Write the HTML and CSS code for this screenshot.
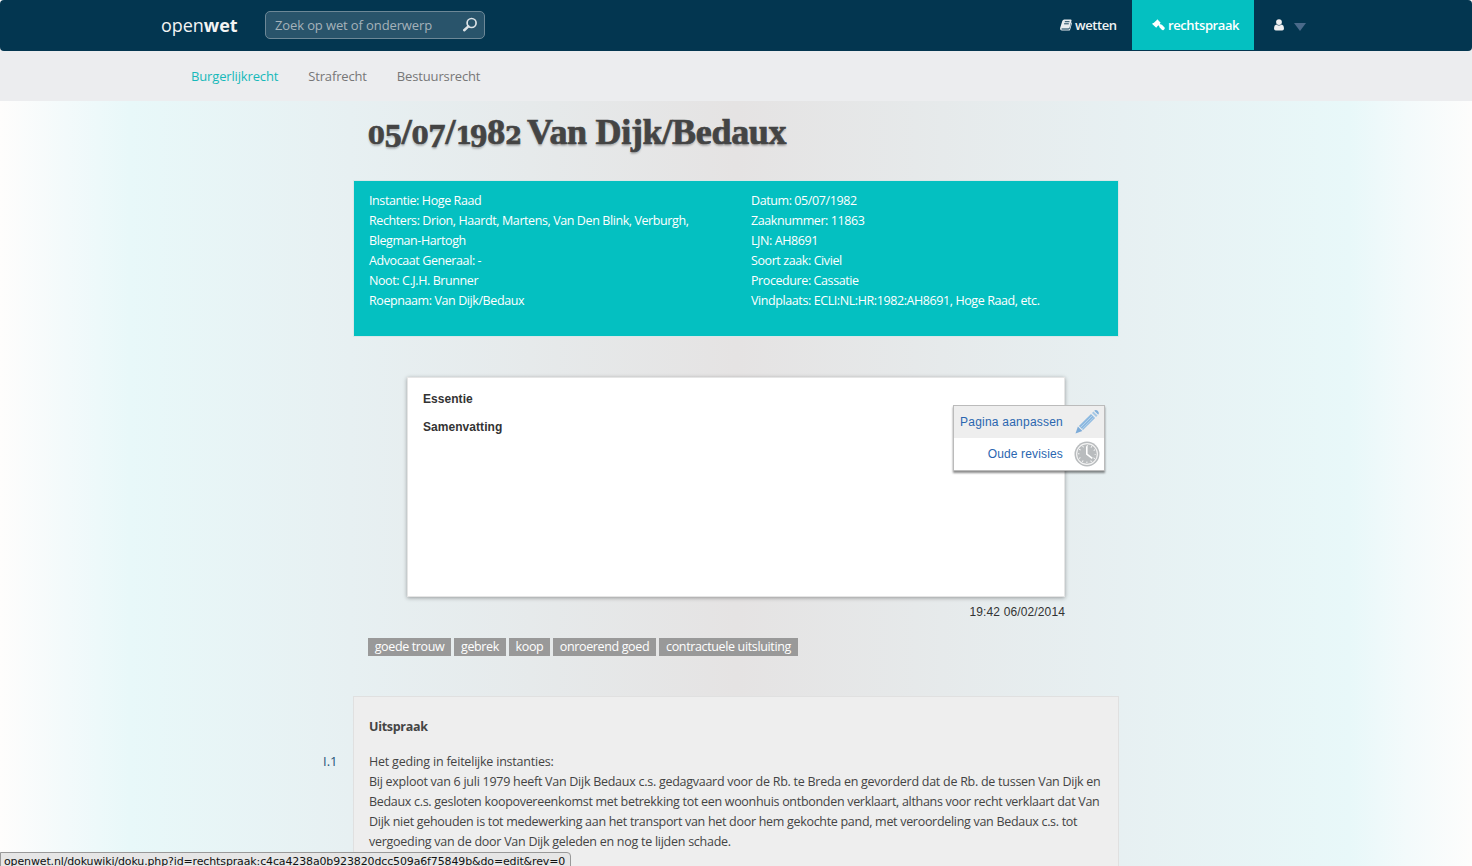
FILE: index.html
```html
<!DOCTYPE html>
<html lang="nl">
<head>
<meta charset="utf-8">
<title>05/07/1982 Van Dijk/Bedaux - openwet</title>
<link rel="stylesheet" href="styles.css">
</head>
<body>
<header class="topbar">
  <div class="topbar-inner">
    <a class="brand">open<b>wet</b></a>
    <div class="search">
      <span class="search-text">Zoek op wet of onderwerp</span>
      <svg class="search-icon" width="16" height="16" viewBox="0 0 16 16"><circle cx="9.6" cy="6" r="4.5" fill="none" stroke="#dce2e6" stroke-width="1.7"/><path d="M6.4 9.4L2.2 13.2" stroke="#dce2e6" stroke-width="2.5" stroke-linecap="round"/></svg>
    </div>
    <nav class="main-nav">
      <a class="nav-wetten"><svg width="12" height="12" viewBox="0 0 12 12"><path d="M4.2.5H10.6Q11.8.5 11.5 1.7L9.6 8.4Q9.3 9.4 8.2 9.4H1.9Q1 9.8 1.8 10.5H8.6L9.5 9.9 11.5 3.2Q12.3 3.6 11.9 4.6L10.2 10.4Q9.9 11.6 8.7 11.6H1.8Q-.4 11 .2 8.8L2.3 2Q2.8.5 4.2.5Z" fill="#e8ecef"/><path d="M4.8 2.7H9.5M4.1 4.8H8.8" stroke="#033650" stroke-width=".9"/></svg><span>wetten</span></a>
      <a class="nav-rechtspraak"><svg width="13" height="12" viewBox="0 0 13 12"><path d="M5.3.3L8.7 3.7 7.8 4.5 9 5.8 9.7 5.6 12.8 8.8Q13 10 11.6 11Q10.8 11.6 9.8 10.8L7.2 8.1 7.4 7.4 6.3 6.2 4.2 8.8.2 4.9.8 4 1.6 4 4.6 1.2Z" fill="#fff"/></svg><span>rechtspraak</span></a>
      <a class="nav-user"><svg width="11" height="12" viewBox="0 0 10 12"><circle cx="5" cy="3.1" r="2.9" fill="#f0f0f1"/><path d="M2.2 5.4Q5 7.6 7.8 5.4Q10 6 10 9.2Q10 11.4 8.2 11.4H1.8Q0 11.4 0 9.2Q0 6 2.2 5.4Z" fill="#f0f0f1"/></svg><i class="caret"></i></a>
    </nav>
  </div>
</header>
<nav class="subnav">
  <a class="sub active">Burgerlijkrecht</a><a class="sub">Strafrecht</a><a class="sub">Bestuursrecht</a>
</nav>
<main class="page">
  <h1 class="title"><span class="dates"><span class="lo">0</span><span class="dn">5</span>/<span class="lo">0</span><span class="dn">7</span>/<span class="lo one">1</span><span class="dn">9</span>8<span class="lo">2</span></span><span class="name">Van Dijk/Bedaux</span></h1>
  <section class="info">
    <div class="info-col">
      <div>Instantie: Hoge Raad</div>
      <div>Rechters: Drion, Haardt, Martens, Van Den Blink, Verburgh,<br>Blegman-Hartogh</div>
      <div>Advocaat Generaal: -</div>
      <div>Noot: C.J.H. Brunner</div>
      <div>Roepnaam: Van Dijk/Bedaux</div>
    </div>
    <div class="info-col">
      <div>Datum: 05/07/1982</div>
      <div>Zaaknummer: 11863</div>
      <div>LJN: AH8691</div>
      <div>Soort zaak: Civiel</div>
      <div>Procedure: Cassatie</div>
      <div>Vindplaats: ECLI:NL:HR:1982:AH8691, Hoge Raad, etc.</div>
    </div>
  </section>
  <section class="summary">
    <h2>Essentie</h2>
    <h2>Samenvatting</h2>
    <div class="tools">
      <a class="tool current"><span>Pagina aanpassen</span><svg width="26" height="26" viewBox="0 0 26 26"><path d="M1.5 24.5L3.9 17.6 8.4 22.1Z" fill="#7cabd8"/><path d="M4.9 17L17 4.9 21.1 9 9 21.1Z" fill="#8db9e0"/><path d="M6.5 18.5L18 7M8 20.2L19.7 8.5" stroke="#c9def0" stroke-width=".7"/><path d="M18 3.9L19.4 2.5 23.5 6.6 22.1 8Z" fill="#a5c8e6"/><path d="M20.2 1.7Q22 .2 23.9 2.1T24.3 5.8Z" fill="#82b0db"/></svg></a>
      <a class="tool"><span>Oude revisies</span><svg width="26" height="26" viewBox="0 0 26 26"><circle cx="13" cy="13" r="12.5" fill="#b9bcbe"/><circle cx="13" cy="13" r="10.4" fill="#b9bcbe" stroke="#f4f4f4" stroke-width="1.1"/><circle cx="13" cy="13" r="8.3" fill="none" stroke="#fff" stroke-width="1.6" stroke-dasharray=".9 3.446" stroke-dashoffset=".45"/><path d="M12.8 5.2V13.2L18.3 17.4" fill="none" stroke="#fff" stroke-width="1.6"/></svg></a>
    </div>
  </section>
  <div class="stamp">19:42 06/02/2014</div>
  <div class="tags"><a class="t1">goede trouw</a><a class="t2">gebrek</a><a class="t3">koop</a><a class="t4">onroerend goed</a><a class="t5">contractuele uitsluiting</a></div>
  <section class="ruling">
    <h3>Uitspraak</h3>
    <div class="para">
      <a class="marker">I.1</a>
      <p><span class="l0">Het geding in feitelijke instanties:</span><br>
      <span class="l1">Bij exploot van 6 juli 1979 heeft Van Dijk Bedaux c.s. gedagvaard voor de Rb. te Breda en gevorderd dat de Rb. de tussen Van Dijk en</span><br>
      <span class="l2">Bedaux c.s. gesloten koopovereenkomst met betrekking tot een woonhuis ontbonden verklaart, althans voor recht verklaart dat Van</span><br>
      <span class="l3">Dijk niet gehouden is tot medewerking aan het transport van het door hem gekochte pand, met veroordeling van Bedaux c.s. tot</span><br>
      <span class="l4">vergoeding van de door Van Dijk geleden en nog te lijden schade.</span></p>
    </div>
  </section>
</main>
<div class="status">openwet.nl/dokuwiki/doku.php?id=rechtspraak:c4ca4238a0b923820dcc509a6f75849b&amp;do=edit&amp;rev=0</div>
</body>
</html>
```
FILE: styles.css
```css
* { box-sizing: border-box; }
html, body { height: 866px; }
body {
  margin: 0;
  overflow: hidden;
  font: 13px/20px "Open Sans", sans-serif;
  color: #444;
  background: linear-gradient(90deg, #fefdfc 0, #f3fafb 65px, #e8f8f9 130px, #e7f0f2 350px, #e5e3e3 736px, #e7f0f2 1122px, #e8f8f9 1350px, #f3fafb 1407px, #fdfdfc 100%);
}
.topbar { position: relative; z-index: 1; height: 51px; background: #033650; border-radius: 4px; }
.subnav { margin-top: -4px; padding: 4px 0 0 191px; height: 54px; background: #ecedef; display: flex; align-items: center; color: #777; letter-spacing: -.15px; }
.topbar-inner { width: 1150px; margin: 0 auto; height: 51px; display: flex; align-items: flex-start; }
.brand { width: 104px; line-height: 51px; font-size: 18px; letter-spacing: -.05px; color: #f4f4f4; white-space: nowrap; }
.search { margin-top: 11px; width: 220px; height: 28px; border: 1px solid #6d8897; border-radius: 5px; background: #29546b; display: flex; align-items: center; justify-content: space-between; padding: 0 6px 0 9px; color: #a5b2ba; white-space: nowrap; letter-spacing: -.12px; }
.main-nav { margin-left: auto; margin-right: 5px; display: flex; height: 50px; color: #f1f3f4; font-weight: 600; letter-spacing: -.4px; }
.main-nav a { display: flex; align-items: center; gap: 3px; }
.nav-wetten { width: 72px; }
.nav-rechtspraak { width: 122px; padding-left: 20px; background: #04c0c1; color: #fff; }
.main-nav .nav-user { width: 52px; padding-left: 20px; gap: 10px; }
.caret { border: solid transparent; border-width: 8px 6px 0; border-top-color: #4a6a8a; margin-top: 3px; }
.active { color: #16b9ba; }
.sub { margin-right: 30px; }
.page { width: 766px; margin-left: 353px; }
.title { margin: 0; padding-left: 15px; height: 79px; font: bold 36px/62px "Liberation Serif", serif; color: #444; text-shadow: 0 2px 2px rgba(0,0,0,.25); white-space: nowrap; -webkit-text-stroke: .7px #444; }
.dates { display: inline-block; width: 159px; }
.name { letter-spacing: -.3px; }
.lo { font: bold 24px/1 "DejaVu Serif", serif; }
.one { letter-spacing: -2px; }
.dn { display: inline-block; line-height: 1; font-size: 34px; vertical-align: -3px; }
.info { height: 157px; border: 1px solid #d9e8e8; background: #04c0c1; display: grid; grid-template-columns: 382px 1fr; padding: 10px 0 0 15px; color: #fff; font-size: 12.5px; letter-spacing: -.41px; white-space: nowrap; }
.summary { position: relative; margin: 40px 54px 0 54px; height: 220px; padding: 11px 15px; border: 1px solid #e5e5e5; background: #fff; box-shadow: 0 1px 4px rgba(0,0,0,.35); font-family: "Liberation Sans", sans-serif; }
.summary h2 { margin: 0 0 8px; font-size: 12px; line-height: 20px; color: #333; letter-spacing: .05px; }
.tools { position: absolute; left: 545px; top: 27px; width: 152px; height: 66px; border: 1px solid #bbb; background: #fff; box-shadow: 0 2px 2px rgba(0,0,0,.45); }
.tool { display: flex; height: 32px; align-items: center; justify-content: flex-end; gap: 11px; padding-right: 4px; color: #2a66b0; font-size: 12px; letter-spacing: .15px; white-space: nowrap; }
.current { background: #eee; letter-spacing: .22px; }
.stamp { margin: 5px 54px 0 0; text-align: right; font: 12px/20px "Liberation Sans", sans-serif; color: #333; letter-spacing: .13px; }
.tags { display: flex; gap: 3px; margin: 16px 0 0 15px; color: #fff; font-size: 12.5px; letter-spacing: -.36px; white-space: nowrap; }
.tags a { height: 18px; line-height: 18px; background: #999; text-align: center; }
.t1 { width: 83px; } .t2 { width: 52px; } .t3 { width: 41px; } .t4 { width: 103px; } .t5 { width: 139px; }
.ruling { margin-top: 40px; height: 200px; border: 1px solid #e0e0e0; background: #eee; padding: 20px 15px; }
.ruling h3 { margin: 0 0 15px; font-size: 12.5px; line-height: 20px; letter-spacing: -.3px; }
.para { display: flex; margin-left: -46px; }
.marker { width: 46px; flex: none; line-height: 18px; color: #25557a; }
.para p { margin: 0; white-space: nowrap; font-size: 12.5px; letter-spacing: -.265px; }
.l0 { letter-spacing: -.21px; }
.l2, .l3 { letter-spacing: -.3px; }
.status { position: absolute; left: 0; top: 852px; width: 571px; height: 18px; border: 1px solid #999; border-radius: 0 4px 0 0; background: #e6e6e6; padding-left: 3px; font: 11px/17px "DejaVu Sans", sans-serif; color: #111; white-space: nowrap; letter-spacing: -.135px; }
```
